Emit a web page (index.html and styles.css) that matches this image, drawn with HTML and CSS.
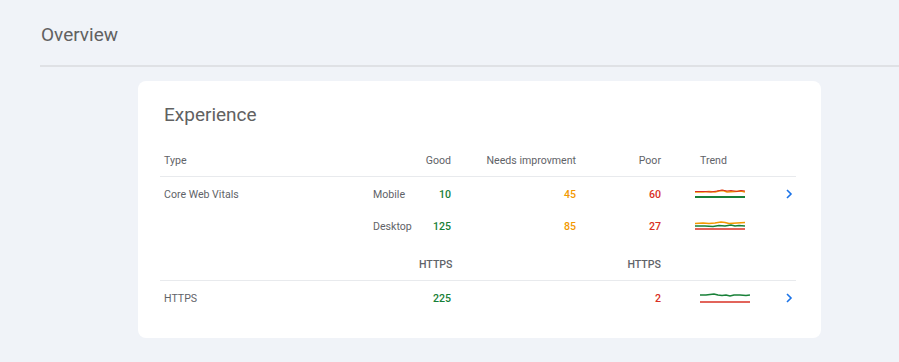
FILE: index.html
```html
<!DOCTYPE html>
<html lang="en">
  <head>
    <meta charset="UTF-8" />
    <meta name="viewport" content="width=device-width, initial-scale=1.0" />
    <title>Overview</title>
    <link rel="stylesheet" href="styles.css">
  </head>
  <body>
    <div class="page-header">
      <h1>Overview</h1>
    </div>

    <div class="card">
      <h2>Experience</h2>

      <div class="report">
        <div class="row head-row">
          <div class="cell">Type</div>
          <div class="cell"></div>
          <div class="cell num">Good</div>
          <div class="cell num">Needs improvment</div>
          <div class="cell num">Poor</div>
          <div class="cell trend"><span class="trend-label">Trend</span></div>
          <div class="cell"></div>
        </div>

        <div class="row body-row first">
          <div class="cell">Core Web Vitals</div>
          <div class="cell">Mobile</div>
          <div class="cell num good">10</div>
          <div class="cell num needs">45</div>
          <div class="cell num poor">60</div>
          <div class="cell trend">
            <svg class="spark" width="50" height="10" viewBox="0 0 50 10">
              <path d="M0 3 L8 3 L14 2.5 L20 3 L24 2 L28 1.5 L32 3 L40 2.5 L46 2 L50 3" fill="none" stroke="#f29900" stroke-width="1.5" />
              <path d="M0 2.5 L10 2.5 L16 3 L22 2 L27 1 L32 2 L36 1.5 L42 2.5 L46 1.5 L50 2" fill="none" stroke="#d93025" stroke-width="1.2" />
              <path d="M0 8 L50 8" fill="none" stroke="#188038" stroke-width="2" />
            </svg>
          </div>
          <div class="cell link">
            <svg width="8" height="10" viewBox="0 0 8 10"><path d="M2 1 L6 5 L2 9" fill="none" stroke="#1a73e8" stroke-width="1.6" /></svg>
          </div>
        </div>

        <div class="row body-row">
          <div class="cell"></div>
          <div class="cell">Desktop</div>
          <div class="cell num good">125</div>
          <div class="cell num needs">85</div>
          <div class="cell num poor">27</div>
          <div class="cell trend">
            <svg class="spark" width="50" height="10" viewBox="0 0 50 10">
              <path d="M0 2.5 L8 2 L14 2.5 L20 2 L26 1 L30 1.5 L34 2.5 L42 2 L50 1.5" fill="none" stroke="#f29900" stroke-width="1.5" />
              <path d="M0 5 L10 5 L18 5.5 L24 4.5 L30 5 L36 4 L40 5 L44 4.5 L50 5" fill="none" stroke="#188038" stroke-width="1.5" />
              <path d="M0 8 L50 8" fill="none" stroke="#d93025" stroke-width="1.5" />
            </svg>
          </div>
          <div class="cell"></div>
        </div>

        <div class="row sub-row">
          <div class="cell"></div>
          <div class="cell"></div>
          <div class="cell num">HTTPS</div>
          <div class="cell"></div>
          <div class="cell num">HTTPS</div>
          <div class="cell"></div>
          <div class="cell"></div>
        </div>

        <div class="row body-row first">
          <div class="cell">HTTPS</div>
          <div class="cell"></div>
          <div class="cell num good">225</div>
          <div class="cell num"></div>
          <div class="cell num poor">2</div>
          <div class="cell trend">
            <svg class="spark shifted" width="50" height="12" viewBox="0 0 50 12">
              <path d="M0 3 L6 3 L10 2.5 L14 2 L18 3 L22 3.5 L26 3 L30 4 L34 3 L40 3 L46 3.5 L50 3" fill="none" stroke="#188038" stroke-width="1.6" />
              <path d="M0 10 L50 10" fill="none" stroke="#d93025" stroke-width="1.6" />
            </svg>
          </div>
          <div class="cell link">
            <svg width="8" height="10" viewBox="0 0 8 10"><path d="M2 1 L6 5 L2 9" fill="none" stroke="#1a73e8" stroke-width="1.6" /></svg>
          </div>
        </div>
      </div>
    </div>
  </body>
</html>
```

FILE: styles.css
```css
body {
  margin: 0;
  background-color: #f0f3f8;
  font-family: Roboto, "Liberation Sans", sans-serif;
  color: #5f6368;
}
.page-header {
  margin-left: 40px;
  padding: 23px 0 18px 1px;
  border-bottom: 2px solid #dfe1e5;
}
h1 {
  margin: 0;
  font-size: 19px;
  line-height: 24px;
  font-weight: 400;
  color: #616161;
}
.card {
  margin: 14px 0 0 138px;
  width: 683px;
  box-sizing: border-box;
  padding: 22px 25px 24px 22px;
  background-color: #fff;
  border-radius: 8px;
}
h2 {
  margin: 0 0 17px 0;
  padding-left: 4px;
  font-size: 19px;
  line-height: 24px;
  font-weight: 400;
  color: #616161;
}
.row {
  display: grid;
  grid-template-columns: 209px 46px 40px 125px 85px 105px 26px;
  align-items: center;
  font-size: 10.6px;
}
.cell {
  padding: 0 4px;
}
.num {
  text-align: right;
}
.head-row {
  height: 32px;
  border-bottom: 1px solid #e8eaed;
}
.body-row {
  height: 32px;
}
.body-row.first {
  margin-top: 1px;
}
.sub-row {
  height: 32px;
  margin-top: 6px;
  border-bottom: 1px solid #e8eaed;
  font-weight: 500;
}
.good {
  color: #188038;
  font-weight: 500;
}
.needs {
  color: #f29900;
  font-weight: 500;
}
.poor {
  color: #d93025;
  font-weight: 500;
}
.trend {
  padding-left: 30px;
  display: flex;
  align-items: center;
}
.trend-label {
  margin-left: 5px;
}
.spark {
  display: block;
}
.spark.shifted {
  margin-left: 5px;
}
.link {
  display: flex;
  justify-content: flex-end;
  padding: 0 3px 0 0;
}
.link svg {
  display: block;
}
```
